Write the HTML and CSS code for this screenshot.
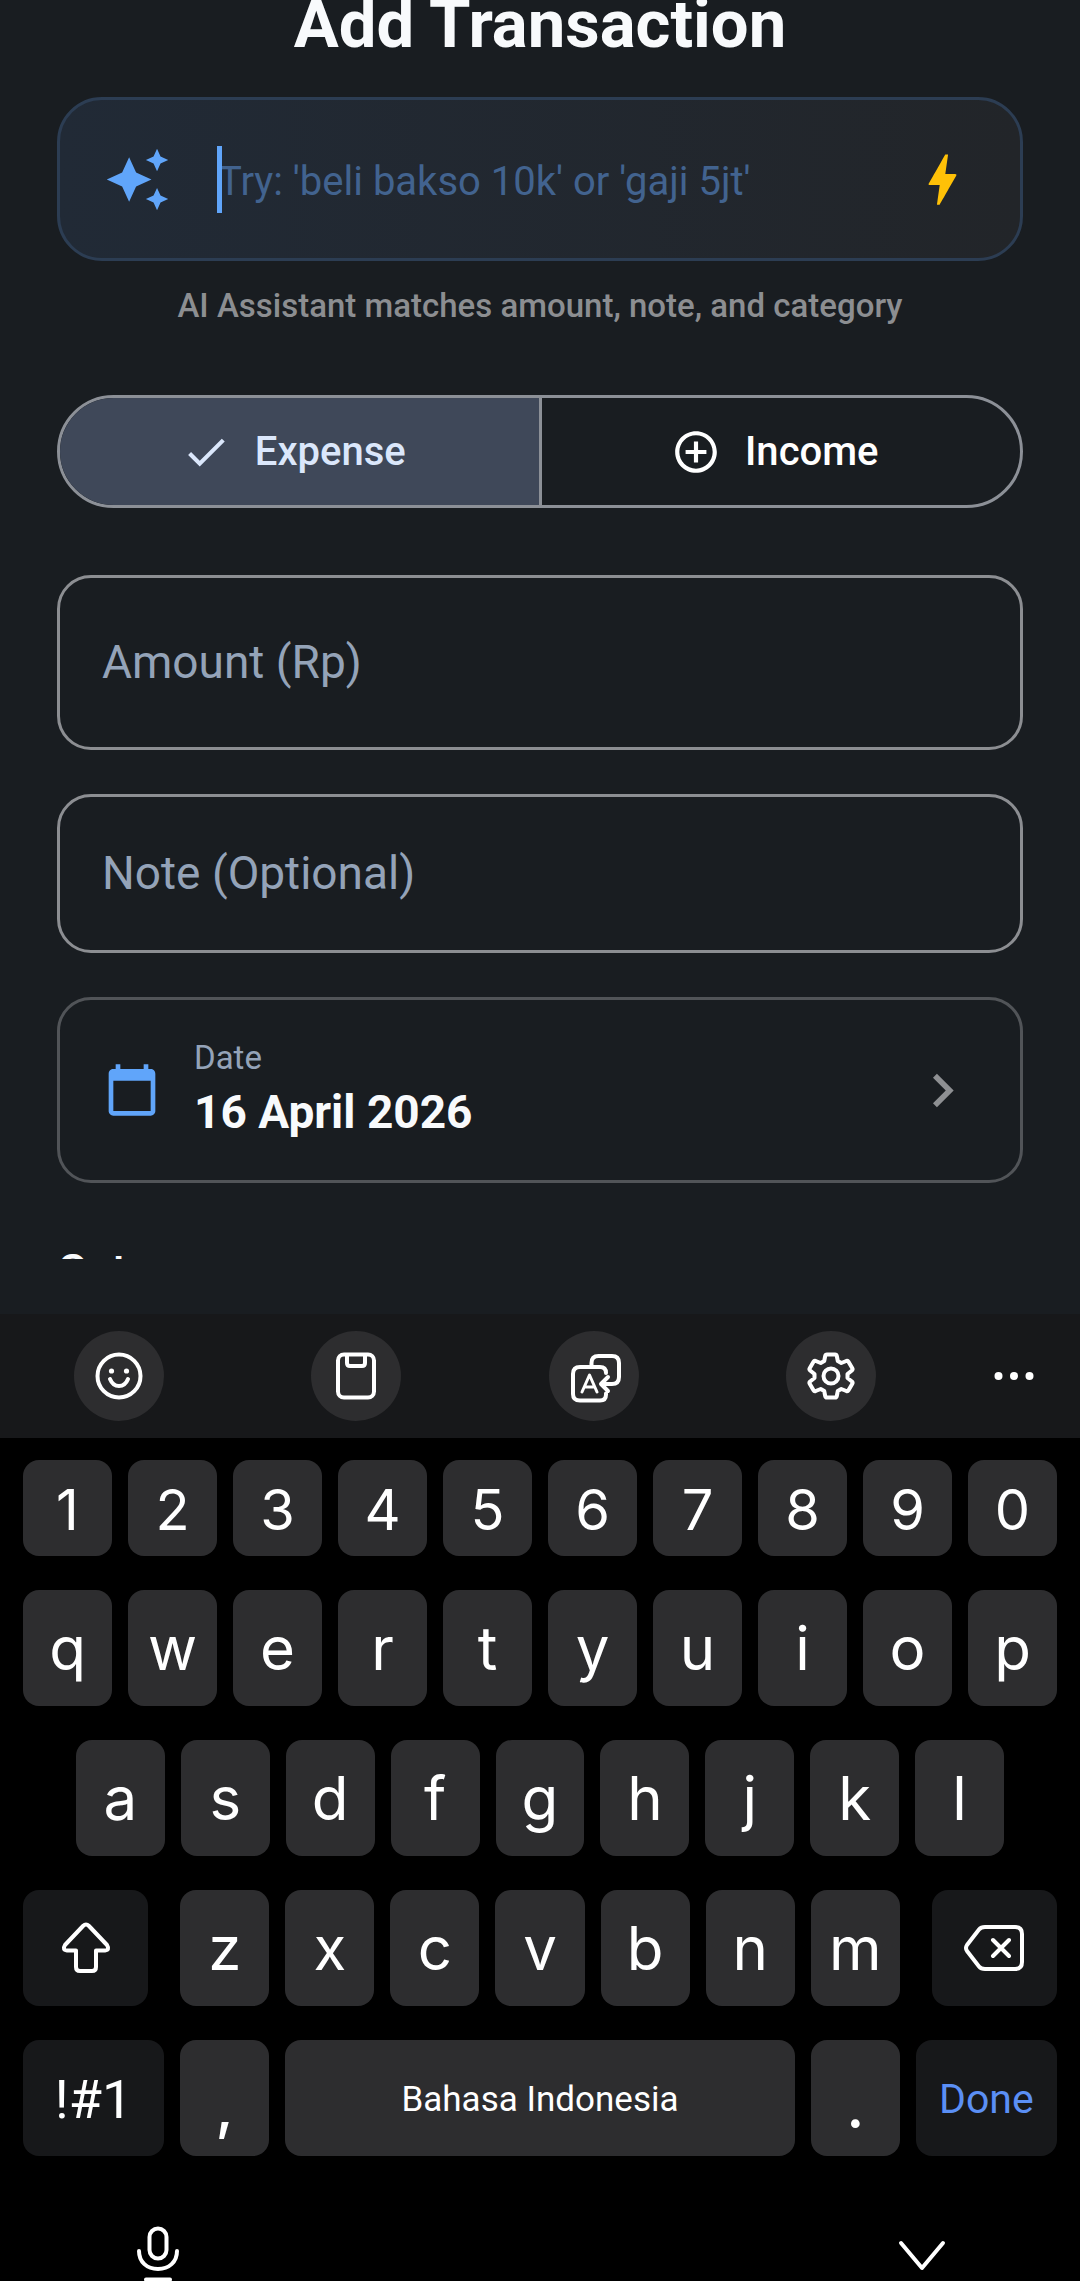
FILE: index.html
```html
<!DOCTYPE html>
<html lang="en">

<head>
    <meta charset="UTF-8">
    <meta name="viewport" content="width=device-width, initial-scale=1.0">
    <title>Add Transaction</title>
    <link rel="stylesheet" href="styles.css">
</head>

<body>
    <main class="sheet">
        <h1>Add Transaction</h1>

        <div class="assistant">
            <svg class="icon icon-blue" viewBox="0 0 24 24"><path d="M19 9l1.25-2.75L23 5l-2.75-1.25L19 1l-1.25 2.75L15 5l2.75 1.25L19 9zm-7.5.5L9 4 6.5 9.5 1 12l5.5 2.5L9 20l2.5-5.5L17 12l-5.5-2.5zM19 15l-1.25 2.75L15 19l2.75 1.25L19 23l1.25-2.75L23 19l-2.75-1.25L19 15z"/></svg>
            <div class="prompt">
                <span class="caret"></span>
                <input type="text" aria-label="AI Assistant" placeholder="Try: 'beli bakso 10k' or 'gaji 5jt'">
            </div>
            <svg class="icon icon-amber" viewBox="0 0 24 24"><path d="M11 21h-1l1-7H7.5c-.58 0-.57-.32-.38-.66.19-.34.05-.08.07-.12C8.48 10.94 10.42 7.54 13 3h1l-1 7h3.5c.49 0 .56.33.47.51l-.07.15C12.96 17.55 11 21 11 21z"/></svg>
        </div>
        <p class="hint">AI Assistant matches amount, note, and category</p>

        <div class="segments">
            <button class="segment selected" aria-pressed="true">
                <svg class="icon-sm" viewBox="0 0 24 24"><path d="M9 16.17L4.83 12l-1.42 1.41L9 19 21 7l-1.41-1.41z"/></svg>
                Expense
            </button>
            <button class="segment" aria-pressed="false">
                <svg class="icon-sm" viewBox="0 0 24 24"><path d="M13 7h-2v4H7v2h4v4h2v-4h4v-2h-4V7zm-1-5C6.48 2 2 6.48 2 12s4.48 10 10 10 10-4.48 10-10S17.52 2 12 2zm0 18c-4.41 0-8-3.59-8-8s3.59-8 8-8 8 3.59 8 8-3.59 8-8 8z"/></svg>
                Income
            </button>
        </div>

        <div class="fields">
            <input class="field amount" type="text" aria-label="Amount (Rp)" placeholder="Amount (Rp)">
            <input class="field note" type="text" aria-label="Note (Optional)" placeholder="Note (Optional)">
            <button class="date">
                <svg class="icon-md icon-blue" viewBox="0 0 24 24"><path d="M20 3h-1V1h-2v2H7V1H5v2H4c-1.1 0-2 .9-2 2v16c0 1.1.9 2 2 2h16c1.1 0 2-.9 2-2V5c0-1.1-.9-2-2-2zm0 18H4V8h16v13z"/></svg>
                <span class="date-text">
                    <span class="date-label">Date</span>
                    <span class="date-value">16 April 2026</span>
                </span>
                <svg class="icon icon-grey" viewBox="0 0 24 24"><path d="M10 6L8.59 7.41 13.17 12l-4.58 4.59L10 18l6-6z"/></svg>
            </button>
        </div>

        <!-- the rest of the form is scrolled under the keyboard -->
        <div class="peek">
            <h2>Category</h2>
        </div>
    </main>

    <section class="keyboard">
        <div class="toolbar">
            <div class="tools">
                <button class="tool" aria-label="Emoji">
                    <svg viewBox="0 0 52 52"><circle cx="26" cy="26" r="21.5"/><path d="M17 29c2 5 5 7 9 7s7-2 9-7"/><circle class="dot" cx="18.5" cy="21" r="2.6"/><circle class="dot" cx="33.5" cy="21" r="2.6"/></svg>
                </button>
                <button class="tool" aria-label="Clipboard">
                    <svg viewBox="0 0 52 52"><rect x="8" y="4.5" width="36" height="43" rx="6"/><path d="M17 5v8q0 3 3 3h12q3 0 3-3V5"/></svg>
                </button>
                <button class="tool" aria-label="Translate">
                    <svg viewBox="0 0 52 52"><path d="M23.5 17v-4q0-7 7-7H44q7 0 7 7v14q0 7-7 7H34M40 27l-7 7 7 7M38 23q0-6-6-6H12q-7 0-7 7v20q0 6.500 7 6.500h20q6 0 6-6v-1"/><path class="thin" d="M14 42l7.500-17L29 42M17 37h9"/></svg>
                </button>
                <button class="tool" aria-label="Settings">
                    <svg viewBox="0 0 52 52"><path d="M22 4.5h8q1.500 0 1.800 1.500l1 5 3.500 2 5-2q1.500-.5 2.200.7l3.800 6.600q.7 1.200-.4 2.200L42.500 24v4l4.400 3.500q1.100 1 .4 2.200l-3.800 6.600q-.7 1.200-2.200.7l-5-2-3.500 2-1 5q-.3 1.500-1.800 1.500h-8q-1.500 0-1.800-1.500l-1-5-3.500-2-5 2q-1.500.5-2.200-.7l-3.800-6.600q-.7-1.200.4-2.200L9.500 28v-4l-4.400-3.500q-1.100-1-.4-2.200l3.800-6.600q.7-1.200 2.200-.7l5 2 3.500-2 1-5q.3-1.500 1.800-1.500z"/><circle cx="26" cy="26" r="7.5"/></svg>
                </button>
            </div>
            <button class="more" aria-label="More">
                <svg viewBox="0 0 52 52"><circle class="dot" cx="10.5" cy="26" r="4"/><circle class="dot" cx="26" cy="26" r="4"/><circle class="dot" cx="41.5" cy="26" r="4"/></svg>
            </button>
        </div>

        <div class="keys">
            <div class="row digits">
                <button>1</button><button>2</button><button>3</button><button>4</button><button>5</button>
                <button>6</button><button>7</button><button>8</button><button>9</button><button>0</button>
            </div>
            <div class="row">
                <button>q</button><button>w</button><button>e</button><button>r</button><button>t</button>
                <button>y</button><button>u</button><button>i</button><button>o</button><button>p</button>
            </div>
            <div class="row inset">
                <button>a</button><button>s</button><button>d</button><button>f</button><button>g</button>
                <button>h</button><button>j</button><button>k</button><button>l</button>
            </div>
            <div class="row">
                <button class="dark shift" aria-label="Shift">
                    <svg viewBox="0 0 52 52"><path d="M23 4q3-3 6 0l18 19q3 5-2 5.500h-9V45q0 4-4 4H20q-4 0-4-4V28.500H7q-5-.5-2-5.500z"/></svg>
                </button>
                <button>z</button><button>x</button><button>c</button><button>v</button><button>b</button>
                <button>n</button><button>m</button>
                <button class="dark backspace" aria-label="Backspace">
                    <svg viewBox="0 0 60 52"><path d="M21 5h30q7 0 7 7v28q0 7-7 7H21q-4 0-6-2.500L3 29q-2-3 0-6L15 7.500Q17 5 21 5zM29 18l16 16M45 18L29 34"/></svg>
                </button>
            </div>
            <div class="row">
                <button class="dark symbols">!#1</button>
                <button class="punct">,</button>
                <button class="space">Bahasa Indonesia</button>
                <button class="punct">.</button>
                <button class="dark done">Done</button>
            </div>
        </div>

        <div class="navbar">
            <button aria-label="Voice input">
                <svg viewBox="0 0 52 60"><rect x="17.5" y="3.5" width="17" height="30" rx="8.5"/><path d="M7 26c0 11 8 18 19 18s19-7 19-18M14 54.5h24"/></svg>
            </button>
            <button aria-label="Hide keyboard">
                <svg viewBox="0 0 52 60"><path d="M5 18l21 25 21-25"/></svg>
            </button>
        </div>
    </section>
</body>

</html>
```
FILE: styles.css
```css
* {
    box-sizing: border-box;
}

body {
    margin: 0;
    height: 100vh;
    overflow: hidden;
    background: #000;
    color: #f8fafc;
    font-family: Roboto, sans-serif;
}

button, input {
    margin: 0;
    padding: 0;
    border: none;
    background: none;
    color: inherit;
    font-family: inherit;
}

button {
    cursor: pointer;
}

svg {
    display: block;
    flex: none;
}

.sheet {
    background: #191d21;
    padding: 0 57px 55px;
}

h1 {
    margin: 0 0 49px;
    font-size: 67px;
    line-height: 48px;
    font-weight: 700;
    text-align: center;
}

.icon {
    width: 67px;
    height: 67px;
}

.icon-md {
    width: 56px;
    height: 56px;
}

.icon-sm {
    width: 50px;
    height: 50px;
    fill: currentColor;
}

.icon-blue {
    fill: #60a5fa;
}

.icon-amber {
    fill: #ffc107;
}

.icon-grey {
    fill: #8e9093;
}

.assistant {
    display: flex;
    align-items: center;
    height: 164px;
    padding: 0 44px;
    border: 3px solid #2c3d53;
    border-radius: 45px;
    background: linear-gradient(90deg, #212a36, #222529);
}

.prompt {
    position: relative;
    flex: 1;
    padding-left: 47px;
}

.prompt input {
    display: block;
    width: 100%;
    height: 67px;
    padding-top: 4px;
    font-size: 40px;
    outline: none;
}

.prompt input::placeholder {
    color: #42638f;
    opacity: 1;
}

.caret {
    position: absolute;
    left: 46px;
    top: 0;
    width: 5px;
    height: 67px;
    background: #60a5fa;
}

.hint {
    margin: 25px 0 69px;
    font-size: 33px;
    line-height: 40px;
    font-weight: 500;
    text-align: center;
    color: #8c8e91;
}

.segments {
    display: flex;
    height: 113px;
    margin-bottom: 67px;
    border: 3px solid #8c9097;
    border-radius: 57px;
    overflow: hidden;
}

.segment {
    flex: 1;
    display: flex;
    align-items: center;
    justify-content: center;
    gap: 24px;
    padding-right: 12px;
    font-size: 40px;
    font-weight: 500;
    color: #fff;
}

.segment.selected {
    background: #3f4859;
    color: #dbe7fb;
    border-right: 3px solid #8c9097;
}

.fields {
    display: flex;
    flex-direction: column;
    gap: 44px;
}

.field {
    width: 100%;
    padding: 0 42px 2px;
    border: 3px solid #8c8e92;
    border-radius: 34px;
    font-size: 46px;
}

.field::placeholder {
    color: #94a3b8;
    opacity: 1;
}

.amount {
    height: 175px;
}

.note {
    height: 159px;
}

.date {
    display: flex;
    align-items: center;
    width: 100%;
    height: 186px;
    padding: 0 44px;
    border: 3px solid #515458;
    border-radius: 34px;
    text-align: left;
}

.date-text {
    flex: 1;
    display: flex;
    flex-direction: column;
    margin-left: 34px;
    padding-bottom: 6px;
}

.date-label {
    font-size: 33px;
    line-height: 50px;
    color: #94a3b8;
}

.date-value {
    font-size: 46px;
    line-height: 58px;
    font-weight: 700;
}

.peek {
    height: 14px;
    margin-top: 62px;
    overflow: hidden;
}

h2 {
    margin: 0;
    font-size: 46px;
    line-height: 53px;
    font-weight: 500;
}

/* Keyboard */
.keyboard {
    font-family: Inter, sans-serif;
}

.keyboard svg {
    overflow: visible;
    fill: none;
    stroke: #fff;
    stroke-width: 4;
    stroke-linecap: round;
    stroke-linejoin: round;
}

.keyboard .dot {
    fill: #fff;
    stroke: none;
}

.keyboard .thin {
    stroke-width: 3;
}

.toolbar {
    display: flex;
    align-items: center;
    gap: 112px;
    height: 124px;
    padding: 0 40px 0 74px;
    background: #17181a;
}

.tools {
    flex: 1;
    display: flex;
    justify-content: space-between;
}

.tool {
    display: flex;
    align-items: center;
    justify-content: center;
    width: 90px;
    height: 90px;
    border-radius: 50%;
    background: #2d2d2f;
}

.tool svg, .more svg {
    width: 52px;
    height: 52px;
}

.keys {
    display: flex;
    flex-direction: column;
    gap: 34px;
    padding: 22px 23px 0;
}

.row {
    display: flex;
    gap: 16px;
}

.row button {
    flex: 89 1 0;
    display: flex;
    align-items: center;
    justify-content: center;
    height: 116px;
    border-radius: 16px;
    background: #2d2d2f;
    color: #fff;
    font-size: 60px;
}

.row.digits button {
    height: 96px;
    padding-top: 4px;
    font-size: 56px;
}

.inset {
    padding: 0 53px;
}

.row .dark {
    background: #17181a;
}

.row .shift {
    flex-grow: 125;
    margin-right: 16px;
}

.row .backspace {
    flex-grow: 125;
    margin-left: 16px;
}

.shift svg {
    width: 52px;
    height: 52px;
}

.backspace svg {
    width: 60px;
    height: 52px;
}

.row .symbols, .row .done {
    flex-grow: 141;
    padding-top: 2px;
    font-family: Roboto, sans-serif;
}

.row .symbols {
    font-size: 54px;
}

.row .done {
    font-size: 41px;
    color: #5b8ff5;
}

.row .punct {
    padding-top: 16px;
    font-weight: 500;
}

.row .space {
    flex-grow: 509;
    padding-top: 2px;
    font-family: Roboto, sans-serif;
    font-size: 35px;
}

.navbar {
    display: flex;
    justify-content: space-between;
    padding: 69px 132px 0;
}

.navbar svg {
    width: 52px;
    height: 60px;
}
```
